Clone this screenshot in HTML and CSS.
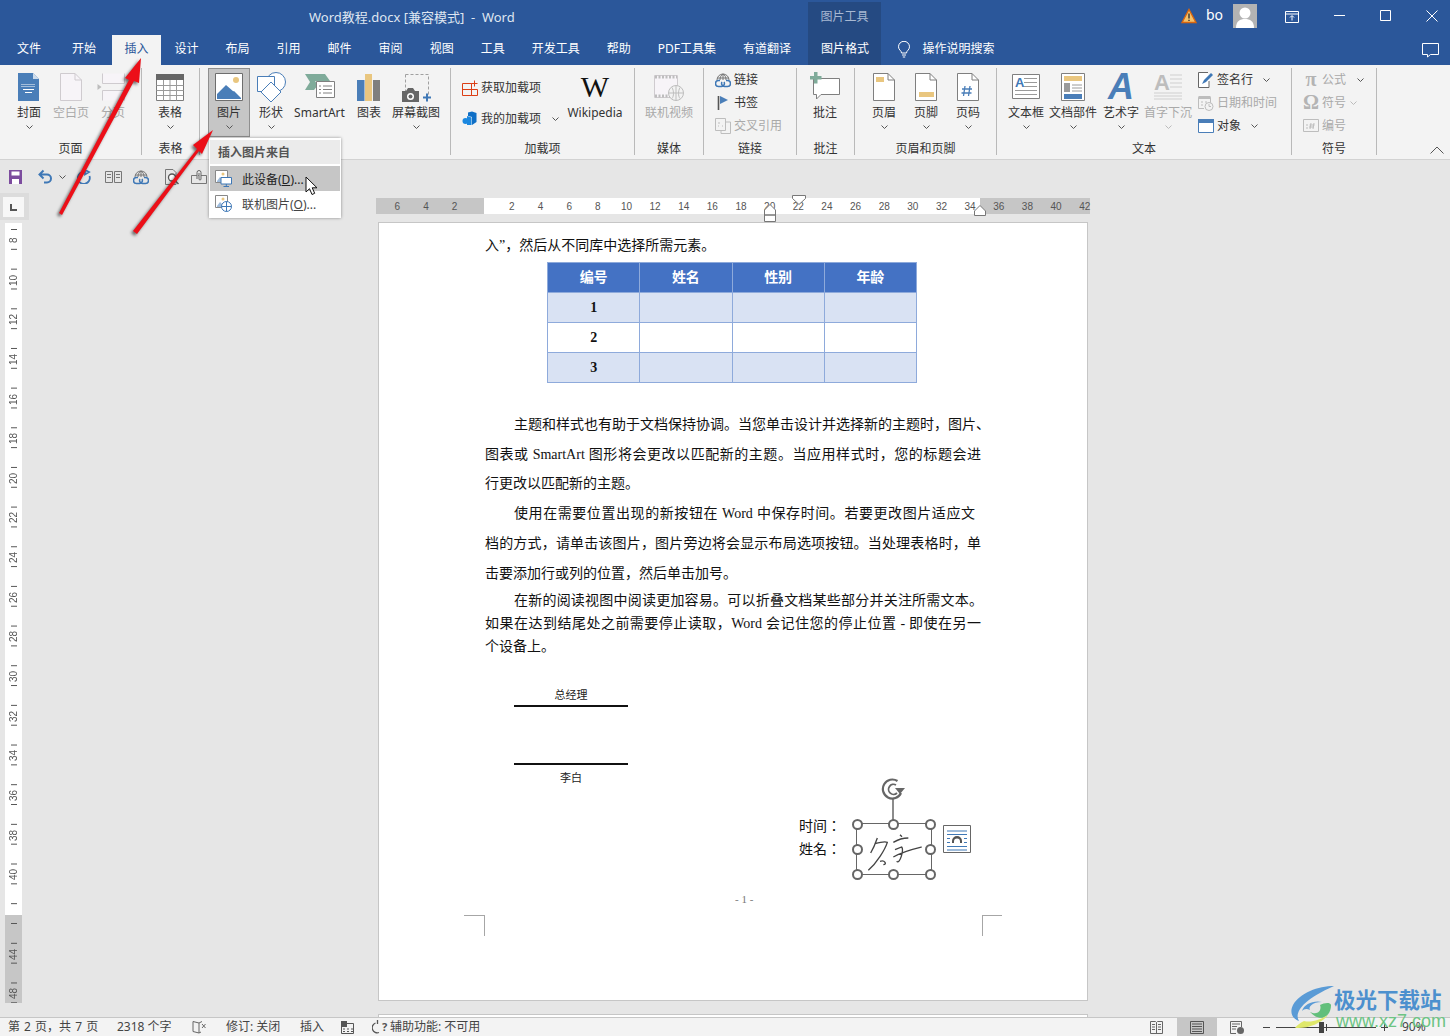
FILE: index.html
```html
<!DOCTYPE html>
<html>

<head>
  <meta charset="utf-8">
  <title>Word教程.docx</title>
  <link rel="stylesheet" href="styles.css">
</head>

<body>
  <!-- 标题栏 -->
  <div class="titlebar">
    <div class="doc-title">Word教程.docx [兼容模式]&nbsp; -&nbsp; Word</div>
    <div class="ctx-title">图片工具</div>
    <div class="win-area">
      <svg class="warn-icon" width="16" height="16" viewBox="0 0 16 16"><path d="M8 1.5L15 14.5H1Z" fill="#f3c26b" stroke="#d9660f" stroke-width="1.4"/><path d="M8 5.5V10.5M8 11.8V13" stroke="#333" stroke-width="1.4"/></svg>
      <span class="user-name">bo</span>
      <div class="avatar"><svg width="24" height="24" viewBox="0 0 24 24"><circle cx="12" cy="9" r="5.5" fill="#fff"/><path d="M3 24C3 17 7 15 12 15S21 17 21 24Z" fill="#fff"/></svg></div>
      <svg class="win-btn display-btn" width="14" height="12" viewBox="0 0 14 12"><path d="M.5 .5H13.5V11.5H.5ZM.5 3H13.5M7 9.5V5M5 6.5L7 4.5L9 6.5" fill="none" stroke="#fff"/></svg>
      <svg class="win-btn min-btn" width="11" height="11" viewBox="0 0 11 11"><path d="M0 5.5H11" stroke="#fff"/></svg>
      <svg class="win-btn max-btn" width="11" height="11" viewBox="0 0 11 11"><path d="M.5 .5H10.5V10.5H.5Z" fill="none" stroke="#fff"/></svg>
      <svg class="win-btn close-btn" width="12" height="12" viewBox="0 0 12 12"><path d="M.5 .5L11.5 11.5M11.5 .5L.5 11.5" stroke="#fff"/></svg>
    </div>
  </div>

  <!-- 选项卡 -->
  <div class="tabbar">
    <div class="tab tab-first">文件</div>
    <div class="tab tab-home">开始</div>
    <div class="tab tab-active">插入</div>
    <div class="tab">设计</div>
    <div class="tab">布局</div>
    <div class="tab">引用</div>
    <div class="tab">邮件</div>
    <div class="tab">审阅</div>
    <div class="tab">视图</div>
    <div class="tab">工具</div>
    <div class="tab">开发工具</div>
    <div class="tab">帮助</div>
    <div class="tab">PDF工具集</div>
    <div class="tab">有道翻译</div>
    <div class="tab tab-ctx">图片格式</div>
    <svg class="bulb" width="14" height="17" viewBox="0 0 14 17"><path d="M4.5 12C4.5 9.5 1.5 9 1.5 5.8A5.5 5.5 0 0 1 12.5 5.8C12.5 9 9.5 9.5 9.5 12ZM5 14H9M5.8 16H8.2" fill="none" stroke="#fff"/></svg>
    <div class="tell-me">操作说明搜索</div>
    <svg class="comment-btn" width="17" height="15" viewBox="0 0 17 15"><path d="M.5 .5H16.5V11.5H8.5L5.5 14V11.5H.5Z" fill="none" stroke="#fff"/></svg>
  </div>

  <!-- 功能区 -->
  <div class="ribbon">
    <div class="group g-page">
      <div class="group-body">
        <div class="big-btn w42">
          <div class="big-icon"><svg width="32" height="32" viewBox="0 0 32 32"><path d="M5 2H20L26 8V30H5Z" fill="#4a7eb8"/><path d="M20 2V8H26Z" fill="#cddcec"/><path d="M8.5 13.5H22.5" stroke="#fff" stroke-dasharray="1 1"/><path d="M8.5 15.5H22.5" stroke="#fff" stroke-dasharray="1 1"/><path d="M10 18.5H21M12 21.5H19" stroke="#fff"/></svg></div>
          <div class="btn-label">封面</div>
          <div class="chev-row"><svg class="chev" width="7" height="4" viewBox="0 0 7 4"><path d="M.5 .5L3.5 3.5L6.5 .5" fill="none" stroke="#555"/></svg></div>
        </div>
        <div class="big-btn w42 off">
          <div class="big-icon"><svg width="32" height="32" viewBox="0 0 32 32"><path d="M5.5 2.5H20L26.5 9V29.5H5.5Z" fill="#f7f4f8" stroke="#cfcbcf"/><path d="M20 2.5V9H26.5" fill="none" stroke="#cfcbcf"/></svg></div>
          <div class="btn-label">空白页</div>
        </div>
        <div class="big-btn w42 off">
          <div class="big-icon"><svg width="32" height="32" viewBox="0 0 32 32"><path d="M5.5 2.5V12.5H27.5V2.5M5.5 29.5V19.5H27.5V29.5" fill="#f7f4f8" stroke="#cfcbcf"/><path d="M.5 13L4.5 16L.5 19Z" fill="#bdbdbd"/></svg></div>
          <div class="btn-label">分页</div>
        </div>
      </div>
      <div class="group-label">页面</div>
    </div>

    <div class="group g-table">
      <div class="group-body">
        <div class="big-btn w42">
          <div class="big-icon"><svg width="32" height="32" viewBox="0 0 32 32"><path d="M2.5 3.5H29.5V29.5H2.5Z" fill="#fff" stroke="#7c7c7c"/><path d="M2 3H30V9H2Z" fill="#666"/><path d="M2.5 14.5H29.5M2.5 19.5H29.5M2.5 24.5H29.5M9.5 9V29.5M16 9V29.5M22.5 9V29.5" stroke="#9a9a9a"/></svg></div>
          <div class="btn-label">表格</div>
          <div class="chev-row"><svg class="chev" width="7" height="4" viewBox="0 0 7 4"><path d="M.5 .5L3.5 3.5L6.5 .5" fill="none" stroke="#555"/></svg></div>
        </div>
      </div>
      <div class="group-label">表格</div>
    </div>

    <div class="group g-illus">
      <div class="group-body">
        <div class="big-btn w42 pressed">
          <div class="big-icon"><svg width="32" height="32" viewBox="0 0 32 32"><path d="M2.5 2.5H29.5V29.5H2.5Z" fill="#fff" stroke="#6e6e6e"/><circle cx="23" cy="9" r="3" fill="#e9c67f"/><path d="M4 28V23L13 14L21 21L18 23L24 28Z" fill="#4a7eb8"/><path d="M20 28L16 23L21 20L28 27V28Z" fill="#4a7eb8"/></svg></div>
          <div class="btn-label">图片</div>
          <div class="chev-row"><svg class="chev" width="7" height="4" viewBox="0 0 7 4"><path d="M.5 .5L3.5 3.5L6.5 .5" fill="none" stroke="#555"/></svg></div>
        </div>
        <div class="big-btn w42">
          <div class="big-icon"><svg width="32" height="32" viewBox="0 0 32 32"><circle cx="21" cy="11" r="9.5" fill="#fff" stroke="#4a7eb8"/><path d="M2.5 5.5H19.5V20.5H2.5Z" fill="#fff" stroke="#4a7eb8"/><path d="M16 11L26 21L16 31L6 21Z" fill="#fff" stroke="#4a7eb8"/></svg></div>
          <div class="btn-label">形状</div>
          <div class="chev-row"><svg class="chev" width="7" height="4" viewBox="0 0 7 4"><path d="M.5 .5L3.5 3.5L6.5 .5" fill="none" stroke="#555"/></svg></div>
        </div>
        <div class="big-btn w55">
          <div class="big-icon"><svg width="32" height="32" viewBox="0 0 32 32"><path d="M1 3H21L26 10H11L14 14L10 19H1L6 11Z" fill="#7fab9a"/><path d="M12.5 10.5H30.5V26.5H12.5Z" fill="#fff" stroke="#808080"/><path d="M15 15H17M19 15H28M15 18.5H17M19 18.5H28M15 22H17M19 22H28" stroke="#808080"/></svg></div>
          <div class="btn-label">SmartArt</div>
        </div>
        <div class="big-btn w44">
          <div class="big-icon"><svg width="32" height="32" viewBox="0 0 32 32"><path d="M4 9H11.5V30H4Z" fill="#4a7eb8"/><path d="M12 3H19V30H12Z" fill="#e9c67f"/><path d="M20 9H27V30H20Z" fill="#7f7f7f"/></svg></div>
          <div class="btn-label">图表</div>
        </div>
        <div class="big-btn w50">
          <div class="big-icon"><svg width="32" height="32" viewBox="0 0 32 32"><path d="M5.5 3.5H28.5V25" fill="none" stroke="#a0a0a0" stroke-dasharray="3 2"/><path d="M5.5 3.5V20" fill="none" stroke="#a0a0a0" stroke-dasharray="3 2"/><path d="M2 20H6L8 17H13L15 20H19V31H2Z" fill="#666"/><circle cx="10.5" cy="25.5" r="3.5" fill="#fff"/><circle cx="10.5" cy="25.5" r="2" fill="#666"/><path d="M23 26.5H31M27 22.5V30.5" stroke="#3f78b6" stroke-width="2"/></svg></div>
          <div class="btn-label">屏幕截图</div>
          <div class="chev-row"><svg class="chev" width="7" height="4" viewBox="0 0 7 4"><path d="M.5 .5L3.5 3.5L6.5 .5" fill="none" stroke="#555"/></svg></div>
        </div>
      </div>
      <div class="group-label">插图</div>
    </div>

    <div class="group g-addin">
      <div class="group-body">
        <div class="small-col addin-col">
          <div class="small-row">
            <svg class="small-icon" width="16" height="16" viewBox="0 0 16 16"><path d="M.5 3.5H9.5V15.5H.5ZM.5 9.5H15.5V15.5H9.5V3.5M12.5 .5V6.5M9.5 3.5H15.5" fill="none" stroke="#dc3e15"/></svg>
            <span>获取加载项</span>
          </div>
          <div class="small-row">
            <svg class="small-icon" width="16" height="16" viewBox="0 0 16 16"><path d="M6 1.5L10 .5L14.5 2V11L10 14V6L6 5Z" fill="#0f6fc6"/><path d="M5 5L9.5 6.5V14H5Z" fill="#1b88e0"/><circle cx="3.5" cy="10" r="3" fill="#1b88e0"/></svg>
            <span>我的加载项</span>
            <svg class="chev chev-mine" width="7" height="4" viewBox="0 0 7 4"><path d="M.5 .5L3.5 3.5L6.5 .5" fill="none" stroke="#555"/></svg>
          </div>
        </div>
        <div class="big-btn w62">
          <div class="big-icon"><span class="wiki-w">W</span></div>
          <div class="btn-label">Wikipedia</div>
        </div>
      </div>
      <div class="group-label">加载项</div>
    </div>

    <div class="group g-media">
      <div class="group-body">
        <div class="big-btn w60 off">
          <div class="big-icon"><svg width="32" height="32" viewBox="0 0 32 32"><path d="M1.5 4.5H24.5V26.5H1.5Z" fill="#f7f4f8" stroke="#cfcbcf"/><path d="M2 6H24M2 25H24" stroke="#bdbdbd" stroke-width="3" stroke-dasharray="2 1.5"/><circle cx="23" cy="22" r="7.5" fill="#f3f3f3" stroke="#bdbdbd"/><path d="M16 22H30M23 14.5V29.5M19 16.5C21 20 21 25 19 27.5M27 16.5C25 20 25 25 27 27.5" fill="none" stroke="#bdbdbd"/></svg></div>
          <div class="btn-label">联机视频</div>
        </div>
      </div>
      <div class="group-label">媒体</div>
    </div>

    <div class="group g-links">
      <div class="group-body">
        <div class="small-col link-col">
          <div class="small-row">
            <svg class="small-icon" width="16" height="16" viewBox="0 0 16 16"><path d="M2 8A6 6 0 0 1 14 8M8 2V8M2 6H14M5 8C5 5 6 3 8 2C10 3 11 5 11 8" fill="none" stroke="#777"/><path d="M5 8.5H3.5A3 3 0 0 0 3.5 14.5H6.5A3 3 0 0 0 9 10M11 8.5H12.5A3 3 0 0 1 12.5 14.5H9.5A3 3 0 0 1 7 10" fill="none" stroke="#3f78b6" stroke-width="1.5"/></svg>
            <span>链接</span>
          </div>
          <div class="small-row">
            <svg class="small-icon" width="16" height="16" viewBox="0 0 16 16"><path d="M3.5 1V15" stroke="#555" stroke-width="1.6"/><path d="M5 1L13 5L5 9Z" fill="#4a7eb8"/></svg>
            <span>书签</span>
          </div>
          <div class="small-row off">
            <svg class="small-icon" width="16" height="16" viewBox="0 0 16 16"><path d="M.5 .5H10.5V12.5H.5ZM6 12.5V15.5H15.5V4H10.5M3 5H5M3 8H4M7 8H8" fill="none" stroke="#bdbdbd"/></svg>
            <span>交叉引用</span>
          </div>
        </div>
      </div>
      <div class="group-label">链接</div>
    </div>

    <div class="group g-comment">
      <div class="group-body">
        <div class="big-btn w42">
          <div class="big-icon"><svg width="32" height="32" viewBox="0 0 32 32"><path d="M4.5 7.5H30.5V23.5H12L7.5 28V23.5H4.5Z" fill="#fff" stroke="#7f7f7f" stroke-linejoin="round"/><path d="M5 1H8.5V5H12.5V8.5H8.5V12.5H5V8.5H1V5H5Z" fill="#7fab9a"/></svg></div>
          <div class="btn-label">批注</div>
        </div>
      </div>
      <div class="group-label">批注</div>
    </div>

    <div class="group g-header">
      <div class="group-body">
        <div class="big-btn w42">
          <div class="big-icon"><svg width="32" height="32" viewBox="0 0 32 32"><path d="M5.5 2.5H20L26.5 9V29.5H5.5Z" fill="#fff" stroke="#7f7f7f"/><path d="M20 2.5V9H26.5" fill="none" stroke="#7f7f7f"/><path d="M8 6H16V11H8Z" fill="#e9c67f"/></svg></div>
          <div class="btn-label">页眉</div>
          <div class="chev-row"><svg class="chev" width="7" height="4" viewBox="0 0 7 4"><path d="M.5 .5L3.5 3.5L6.5 .5" fill="none" stroke="#555"/></svg></div>
        </div>
        <div class="big-btn w42">
          <div class="big-icon"><svg width="32" height="32" viewBox="0 0 32 32"><path d="M5.5 2.5H20L26.5 9V29.5H5.5Z" fill="#fff" stroke="#7f7f7f"/><path d="M20 2.5V9H26.5" fill="none" stroke="#7f7f7f"/><path d="M9 21H24V26H9Z" fill="#e9c67f"/></svg></div>
          <div class="btn-label">页脚</div>
          <div class="chev-row"><svg class="chev" width="7" height="4" viewBox="0 0 7 4"><path d="M.5 .5L3.5 3.5L6.5 .5" fill="none" stroke="#555"/></svg></div>
        </div>
        <div class="big-btn w42">
          <div class="big-icon"><svg width="32" height="32" viewBox="0 0 32 32"><path d="M5.5 2.5H20L26.5 9V29.5H5.5Z" fill="#fff" stroke="#7f7f7f"/><path d="M20 2.5V9H26.5" fill="none" stroke="#7f7f7f"/><path d="M13 15L11.5 25M18 15L16.5 25M10 18H20M9.5 22H19.5" stroke="#4a7eb8" stroke-width="1.3"/></svg></div>
          <div class="btn-label">页码</div>
          <div class="chev-row"><svg class="chev" width="7" height="4" viewBox="0 0 7 4"><path d="M.5 .5L3.5 3.5L6.5 .5" fill="none" stroke="#555"/></svg></div>
        </div>
      </div>
      <div class="group-label">页眉和页脚</div>
    </div>

    <div class="group g-text">
      <div class="group-body">
        <div class="big-btn w44">
          <div class="big-icon"><svg width="32" height="32" viewBox="0 0 32 32"><path d="M2.5 3.5H29.5V27.5H2.5Z" fill="#fff" stroke="#7f7f7f"/><text class="icon-a" x="5" y="16">A</text><path d="M14 7.5H27M14 11.5H27M14 15.5H27M5 19.5H27M5 23.5H27" stroke="#9a9a9a"/></svg></div>
          <div class="btn-label">文本框</div>
          <div class="chev-row"><svg class="chev" width="7" height="4" viewBox="0 0 7 4"><path d="M.5 .5L3.5 3.5L6.5 .5" fill="none" stroke="#555"/></svg></div>
        </div>
        <div class="big-btn w50">
          <div class="big-icon"><svg width="32" height="32" viewBox="0 0 32 32"><path d="M4.5 2.5H27.5V29.5H4.5Z" fill="#fff" stroke="#7f7f7f"/><path d="M7 5H25V10H7Z" fill="#e9c67f"/><path d="M7 12H13V21H7Z" fill="#9a9a9a"/><path d="M15 14H25M15 17H25M15 20H25" stroke="#9a9a9a"/><path d="M7 23H25V28H7Z" fill="#4a7eb8"/></svg></div>
          <div class="btn-label">文档部件</div>
          <div class="chev-row"><svg class="chev" width="7" height="4" viewBox="0 0 7 4"><path d="M.5 .5L3.5 3.5L6.5 .5" fill="none" stroke="#555"/></svg></div>
        </div>
        <div class="big-btn w46">
          <div class="big-icon"><span class="wordart-a">A</span></div>
          <div class="btn-label">艺术字</div>
          <div class="chev-row"><svg class="chev" width="7" height="4" viewBox="0 0 7 4"><path d="M.5 .5L3.5 3.5L6.5 .5" fill="none" stroke="#555"/></svg></div>
        </div>
        <div class="big-btn w48 off">
          <div class="big-icon"><svg width="32" height="32" viewBox="0 0 32 32"><text class="icon-drop" x="2" y="19">A</text><path d="M18 4H30M18 8H30M18 12H30M18 16H30M2 22H30M2 25H30M2 28H30" stroke="#cfcfcf"/></svg></div>
          <div class="btn-label">首字下沉</div>
          <div class="chev-row"><svg class="chev" width="7" height="4" viewBox="0 0 7 4"><path d="M.5 .5L3.5 3.5L6.5 .5" fill="none" stroke="#bbb"/></svg></div>
        </div>
        <div class="small-col text-col">
          <div class="small-row">
            <svg class="small-icon" width="16" height="16" viewBox="0 0 16 16"><path d="M10 .5H.5V15.5H11V9" fill="#fff" stroke="#666"/><path d="M4 12L6 8L13 1L15 3L8 10Z" fill="#3f78b6"/></svg>
            <span>签名行</span>
            <svg class="chev chev-sign" width="7" height="4" viewBox="0 0 7 4"><path d="M.5 .5L3.5 3.5L6.5 .5" fill="none" stroke="#555"/></svg>
          </div>
          <div class="small-row off">
            <svg class="small-icon" width="16" height="16" viewBox="0 0 16 16"><path d="M.5 2.5H12.5V8M.5 2.5V13.5H6" fill="none" stroke="#bdbdbd"/><path d="M.5 1H12.5V4H.5Z" fill="#bdbdbd"/><path d="M3 7H5M7 7H9M3 10H5" stroke="#bdbdbd"/><circle cx="11" cy="11.5" r="4" fill="#f3f3f3" stroke="#bdbdbd"/><path d="M11 9V11.5H13" fill="none" stroke="#bdbdbd"/></svg>
            <span>日期和时间</span>
          </div>
          <div class="small-row">
            <svg class="small-icon" width="16" height="16" viewBox="0 0 16 16"><path d="M.5 1.5H15.5V14.5H.5Z" fill="#fff" stroke="#4a7eb8"/><path d="M0 1H16V5H0Z" fill="#4a7eb8"/></svg>
            <span>对象</span>
            <svg class="chev chev-obj" width="7" height="4" viewBox="0 0 7 4"><path d="M.5 .5L3.5 3.5L6.5 .5" fill="none" stroke="#555"/></svg>
          </div>
        </div>
      </div>
      <div class="group-label">文本</div>
    </div>

    <div class="group g-symbol">
      <div class="group-body">
        <div class="small-col symbol-col">
          <div class="small-row off">
            <span class="sym-glyph">π</span>
            <span>公式</span>
            <svg class="chev chev-eq" width="7" height="4" viewBox="0 0 7 4"><path d="M.5 .5L3.5 3.5L6.5 .5" fill="none" stroke="#555"/></svg>
          </div>
          <div class="small-row off">
            <span class="sym-glyph">Ω</span>
            <span>符号</span>
            <svg class="chev chev-om" width="7" height="4" viewBox="0 0 7 4"><path d="M.5 .5L3.5 3.5L6.5 .5" fill="none" stroke="#bbb"/></svg>
          </div>
          <div class="small-row off">
            <svg class="small-icon" width="16" height="14" viewBox="0 0 16 14"><path d="M.5 .5H15.5V12.5H.5Z" fill="none" stroke="#bdbdbd"/><path d="M3 6H5M3 9H5M8 4L7 10M11 4L10 10M6.5 6H11.5M6 8H11" stroke="#bdbdbd"/></svg>
            <span>编号</span>
          </div>
        </div>
      </div>
      <div class="group-label">符号</div>
    </div>

    <svg class="collapse" width="14" height="8" viewBox="0 0 14 8"><path d="M.5 7.5L7 1L13.5 7.5" fill="none" stroke="#555"/></svg>
  </div>

  <!-- 快速访问工具栏 -->
  <div class="qat">
    <svg class="qat-icon q-save" width="13" height="14" viewBox="0 0 13 14"><path d="M0 0H13V14H0Z" fill="#7c4c9e"/><path d="M2.5 1.5H10.5V5.5H2.5Z" fill="#fff"/><path d="M3 9H10V14H3Z" fill="#fff"/></svg>
    <svg class="qat-icon q-undo" width="15" height="15" viewBox="0 0 15 15"><path d="M2 5.5H9A4 4 0 0 1 9 13.5H6M5.5 1.5L1.5 5.5L5.5 9.5" fill="none" stroke="#3f78b6" stroke-width="2"/></svg>
    <svg class="qat-icon q-chev" width="7" height="4" viewBox="0 0 7 4"><path d="M.5 .5L3.5 3.5L6.5 .5" fill="none" stroke="#555"/></svg>
    <svg class="qat-icon q-redo" width="14" height="14" viewBox="0 0 14 14"><path d="M8 2A6 6 0 1 0 12.5 6M8 0V4.5L12 2Z" fill="none" stroke="#3f78b6" stroke-width="1.8"/></svg>
    <svg class="qat-icon q-book" width="17" height="12" viewBox="0 0 17 12"><path d="M.5 .5H7.5V11.5H.5ZM9.5 .5H16.5V11.5H9.5ZM2 3.5H6M2 6.5H6M11 3.5H15M11 6.5H15" fill="none" stroke="#777"/></svg>
    <svg class="qat-icon q-link" width="16" height="16" viewBox="0 0 16 16"><path d="M2 8A6 6 0 0 1 14 8M8 2V8M2 6H14M5 8C5 5 6 3 8 2C10 3 11 5 11 8" fill="none" stroke="#777"/><path d="M5 8.5H3.5A3 3 0 0 0 3.5 14.5H6.5A3 3 0 0 0 9 10M11 8.5H12.5A3 3 0 0 1 12.5 14.5H9.5A3 3 0 0 1 7 10" fill="none" stroke="#3f78b6" stroke-width="1.5"/></svg>
    <svg class="qat-icon q-prev" width="16" height="16" viewBox="0 0 16 16"><path d="M1.5 .5H9L12 3.5V15.5H1.5Z" fill="none" stroke="#777"/><circle cx="8" cy="8.5" r="3.5" fill="#fff" stroke="#555" stroke-width="1.3"/><path d="M10.5 11L14.5 15" stroke="#555" stroke-width="1.5"/></svg>
    <svg class="qat-icon q-clip" width="16" height="16" viewBox="0 0 16 16"><path d="M.5 6.5H15.5V14.5H.5Z" fill="none" stroke="#777"/><path d="M6 10V3.5A2 2 0 0 1 10 3.5V10A1 1 0 0 1 8 10V4" fill="#e6e6e6" stroke="#666"/></svg>
  </div>

  <!-- 文档区 -->
  <div class="workspace">
    <div class="side-col">
      <div class="corner-wrap">
        <div class="corner-btn"><svg width="7" height="7" viewBox="0 0 7 7"><path d="M1 0V6H7" fill="none" stroke="#555" stroke-width="2"/></svg></div>
      </div>
      <div class="vruler">
        <span class="vnum">8</span><span class="vnum">10</span><span class="vnum">12</span><span class="vnum">14</span><span class="vnum">16</span><span class="vnum">18</span><span class="vnum">20</span><span class="vnum">22</span><span class="vnum">24</span><span class="vnum">26</span><span class="vnum">28</span><span class="vnum">30</span><span class="vnum">32</span><span class="vnum">34</span><span class="vnum">36</span><span class="vnum">38</span><span class="vnum">40</span><span class="vnum"></span><span class="vnum">44</span><span class="vnum">48</span>
      </div>
    </div>

    <div class="doc-col">
      <div class="hruler">
        <span>6</span><span>4</span><span>2</span><span></span><span>2</span><span>4</span><span>6</span><span>8</span><span>10</span><span>12</span><span>14</span><span>16</span><span>18</span><span>20</span><span>22</span><span>24</span><span>26</span><span>28</span><span>30</span><span>32</span><span>34</span><span>36</span><span>38</span><span>40</span><span>42</span>
        <svg class="marker marker-top" width="14" height="10" viewBox="0 0 14 10"><path d="M.5 .5H13.5V3.5L7 9.5L.5 3.5Z" fill="#fff" stroke="#777"/></svg>
        <svg class="marker marker-left" width="12" height="18" viewBox="0 0 12 18"><path d="M6 .5L11.5 6V11H.5V6Z M.5 11H11.5V17.5H.5Z" fill="#fff" stroke="#777"/></svg>
        <svg class="marker marker-right" width="12" height="11" viewBox="0 0 12 11"><path d="M6 .5L11.5 6V10.5H.5V6Z" fill="#fff" stroke="#777"/></svg>
      </div>

      <div class="page">
        <div class="crop crop-left"></div>
        <div class="crop crop-right"></div>

        <div class="line first-line">入”，然后从不同库中选择所需元素。</div>

        <table class="doc-table">
          <tr class="head-row"><th>编号</th><th>姓名</th><th>性别</th><th>年龄</th></tr>
          <tr class="band"><td>1</td><td></td><td></td><td></td></tr>
          <tr><td>2</td><td></td><td></td><td></td></tr>
          <tr class="band"><td>3</td><td></td><td></td><td></td></tr>
        </table>

        <div class="para-wide">
          <div class="jline indent">主题和样式也有助于文档保持协调。当您单击设计并选择新的主题时，图片、</div>
          <div class="jline">图表或 SmartArt 图形将会更改以匹配新的主题。当应用样式时，您的标题会进</div>
          <div class="line">行更改以匹配新的主题。</div>
          <div class="jline indent short">使用在需要位置出现的新按钮在 Word 中保存时间。若要更改图片适应文</div>
          <div class="jline">档的方式，请单击该图片，图片旁边将会显示布局选项按钮。当处理表格时，单</div>
          <div class="line">击要添加行或列的位置，然后单击加号。</div>
        </div>

        <div class="para-tight">
          <div class="jline indent over">在新的阅读视图中阅读更加容易。可以折叠文档某些部分并关注所需文本。</div>
          <div class="jline">如果在达到结尾处之前需要停止读取，Word 会记住您的停止位置 - 即使在另一</div>
          <div class="line">个设备上。</div>
        </div>

        <div class="sign sign-top">总经理</div>
        <div class="sign sign-bottom">李白</div>

        <div class="sign-row">
          <div class="sign-labels">
            <div>时间：</div>
            <div>姓名：</div>
          </div>
          <div class="pic-box">
            <svg class="sign-pic" width="74" height="50" viewBox="232 163 220 150"><path d="M292 205C285 225 278 240 272 250M285 222C300 218 315 215 322 218C315 240 290 280 265 302M300 275C315 270 322 285 310 285M360 195L366 201M340 218C350 212 365 205 385 205M345 240L365 232C372 240 360 285 350 275M340 262C370 245 400 238 425 232" fill="none" stroke="#444" stroke-width="4"/></svg>
            <svg class="rotate-handle" width="34" height="46" viewBox="0 0 34 46"><path d="M17 21V46" stroke="#666" stroke-width="1.5"/><path d="M25 15A9.5 9.5 0 1 1 21.5 3" fill="none" stroke="#666" stroke-width="2.2"/><path d="M21 15A5 5 0 1 1 20 7" fill="none" stroke="#666" stroke-width="1.8"/><path d="M19 10H29L24 16Z" fill="#666"/></svg>
            <i class="handle h-tl"></i><i class="handle h-tm"></i><i class="handle h-tr"></i>
            <i class="handle h-ml"></i><i class="handle h-mr"></i>
            <i class="handle h-bl"></i><i class="handle h-bm"></i><i class="handle h-br"></i>
          </div>
          <div class="layout-btn"><svg width="28" height="28" viewBox="0 0 28 28"><path d="M.5 .5H27.5V27.5H.5Z" fill="#fff" stroke="#666"/><path d="M4 6H24M4 9.5H24M4 21.5H24M4 25H24" stroke="#3f78b6"/><path d="M4 13.5H7M4 17.5H7M21 13.5H24M21 17.5H24" stroke="#3f78b6"/><path d="M9 18V16A5 5 0 0 1 19 16V18H17V16.5A3 3 0 0 0 11 16.5V18Z" fill="#555"/></svg></div>
        </div>

        <div class="page-num">- 1 -</div>
      </div>

      <div class="page next-page"></div>
    </div>
  </div>

  <!-- 状态栏 -->
  <div class="statusbar">
    <span class="st-pages">第 2 页，共 7 页</span>
    <span class="st-words">2318 个字</span>
    <svg class="st-book" width="14" height="13" viewBox="0 0 14 13"><path d="M7 2L1 .5V10.5L7 12V2L10 .5M7 12L9 11" fill="none" stroke="#666"/><path d="M10 3L13.5 7M13.5 3L10 7" stroke="#666"/></svg>
    <span class="st-track">修订: 关闭</span>
    <span class="st-insert">插入</span>
    <svg class="st-macro" width="13" height="13" viewBox="0 0 13 13"><path d="M.5 2.5H12.5V12.5H.5Z" fill="none" stroke="#555"/><path d="M0 0H6V6H0Z" fill="#555"/><path d="M2 8H4M6 8H8M10 8H12M2 10.5H4M6 10.5H8M10 10.5H12" stroke="#555"/></svg>
    <svg class="st-access" width="10" height="14" viewBox="0 0 10 14"><path d="M3.5 3A5 5 0 1 0 7 12.5M5.5 0V4" fill="none" stroke="#555" stroke-width="1.3"/></svg>
    <span class="st-q">?</span>
    <span class="st-a11y">辅助功能: 不可用</span>
    <div class="st-right">
      <svg class="st-view" width="13" height="13" viewBox="0 0 13 13"><path d="M.5 .5H5.5L6.5 1.5L7.5 .5H12.5V12.5H.5ZM6.5 1.5V12.5M2 3.5H5M2 6H5M2 8.5H5M8 3.5H11M8 6H11M8 8.5H11" fill="none" stroke="#666"/></svg>
      <div class="view-active"><svg width="14" height="13" viewBox="0 0 14 13"><path d="M.5 .5H13.5V12.5H.5ZM2 3H12M2 5.5H12M2 8H12M2 10.5H12" fill="none" stroke="#555"/></svg></div>
      <svg class="st-web" width="14" height="13" viewBox="0 0 14 13"><path d="M.5 .5H11.5V6M.5 .5V12.5H6M2 3H10M2 5.5H7M2 8H6" fill="none" stroke="#666"/><circle cx="10.5" cy="9.5" r="3.5" fill="#666"/></svg>
      <span class="zoom-minus"></span>
      <div class="zoom-track"><i class="zoom-mid"></i><i class="zoom-thumb"></i></div>
      <span class="zoom-plus"></span>
      <span class="zoom-val">90%</span>
    </div>
  </div>

  <!-- 下拉菜单 -->
  <div class="menu">
    <div class="menu-head">插入图片来自</div>
    <div class="menu-item menu-hot">
      <svg width="17" height="17" viewBox="0 0 17 17"><path d="M.5 .5H12.5V12.5H.5Z" fill="#fff" stroke="#888"/><circle cx="8" cy="4" r="1.5" fill="#e9c67f"/><path d="M2 11L5 7L8 10V12H2Z" fill="#9dbbdc"/><path d="M6 7.5H16.5V14H6Z" fill="#fff" stroke="#3f78b6"/><path d="M11.3 14V16.5M8.5 16.5H14" stroke="#3f78b6"/></svg>
      <span>此设备(<u>D</u>)...</span>
    </div>
    <div class="menu-item">
      <svg width="17" height="17" viewBox="0 0 17 17"><path d="M.5 .5H12.5V12.5H.5Z" fill="#fff" stroke="#888"/><circle cx="8" cy="4" r="1.5" fill="#e9c67f"/><path d="M2 11L5 7L8 10V12H2Z" fill="#9dbbdc"/><circle cx="11.5" cy="11.5" r="5" fill="#fff" stroke="#3f78b6"/><path d="M6.5 11.5H16.5M11.5 6.5V16.5" stroke="#3f78b6"/></svg>
      <span>联机图片(<u>O</u>)...</span>
    </div>
  </div>

  <svg class="cursor" width="14" height="20" viewBox="0 0 14 20"><path d="M1 1V16L4.5 12.7L7 18.5L9.7 17.3L7.2 11.8H12Z" fill="#fff" stroke="#111"/></svg>

  <!-- 标注箭头 -->
  <svg class="arrows" width="240" height="240" viewBox="0 0 240 240">
    <path d="M59 213L129 80L125 78L141 58L139 83L134 81L62 215Z" fill="#ec0f18"/>
    <path d="M133 231L197 149L193 145L213 130L202 154L199 151L137 234Z" fill="#ec0f18"/>
  </svg>

  <!-- 水印 -->
  <div class="watermark">
    <svg class="wm-logo" width="48" height="46" viewBox="0 0 48 46"><path d="M44 1C28 1 10 8 3 20C-1 28 3 34 9 36C4 28 12 15 44 1Z" fill="#5a9bd6"/><path d="M12 26C14 19 24 15 32 17C22 17 18 22 20 25C16 23 14 24 12 26Z" fill="#5a9bd6"/><path d="M20 27C28 31 32 25 30 20C34 18 40 17 41 20C41 32 30 38 20 27Z" fill="#62bf7b"/><path d="M5 43C18 44 32 38 38 30C32 34 22 38 14 36C10 38 7 40 5 43Z" fill="#dfe86a"/></svg>
    <div class="wm-text">
      <div class="wm-cn">极光下载站</div>
      <div class="wm-url">www.xz7.com</div>
    </div>
  </div>
</body>

</html>
```
FILE: styles.css
```css
html,
body {
  margin: 0;
  padding: 0;
}

body {
  width: 1450px;
  height: 1036px;
  overflow: hidden;
  position: relative;
  display: flex;
  flex-direction: column;
  background-color: #e6e6e6;
  color: #333;
  font-family: "Noto Sans", "Noto Sans CJK SC", sans-serif;
  font-size: 12px;
}

svg {
  display: block;
  flex: none;
}

/* 标题栏 */
.titlebar {
  height: 35px;
  flex: none;
  display: flex;
  background-color: #2b579a;
}

.doc-title {
  margin-left: 309px;
  width: 499px;
  padding-top: 8px;
  font-size: 13px;
  line-height: 18px;
  color: #dfe6f1;
}

.ctx-title {
  width: 73px;
  margin-top: 2px;
  padding-top: 6px;
  text-align: center;
  line-height: 18px;
  color: #a7b8d2;
  background-color: #254a82;
}

.win-area {
  flex: 1;
  display: flex;
  align-items: flex-start;
}

.warn-icon {
  margin: 8px 0 0 300px;
}

.user-name {
  margin: 6px 0 0 9px;
  font-size: 14px;
  line-height: 18px;
  color: #fff;
}

.avatar {
  width: 24px;
  height: 24px;
  margin: 4px 0 0 10px;
  background-color: #b3b3b3;
  overflow: hidden;
}

.win-btn {
  margin-top: 10px;
}

.display-btn {
  margin-left: 28px;
  margin-top: 11px;
}

.min-btn {
  margin-left: 35px;
}

.max-btn {
  margin-left: 35px;
}

.close-btn {
  margin-left: 35px;
}

/* 选项卡 */
.tabbar {
  height: 30px;
  flex: none;
  display: flex;
  background-color: #2b579a;
  color: #fff;
  line-height: 28px;
}

.tab {
  padding: 0 13.5px;
}

.tab-first {
  padding-left: 17px;
  padding-right: 17.5px;
}

.tab-home {
  padding-right: 16px;
}

.tab-active {
  padding: 0 12.5px;
  background-color: #f3f3f3;
  color: #2b579a;
}

.tab-ctx {
  width: 73px;
  margin-left: 4px;
  padding: 0;
  text-align: center;
  background-color: #254a82;
}

.bulb {
  margin: 6px 0 0 16px;
}

.tell-me {
  margin-left: 11px;
}

.comment-btn {
  margin: 8px 0 0 428px;
}

/* 功能区 */
.ribbon {
  height: 94px;
  flex: none;
  position: relative;
  display: flex;
  align-items: flex-start;
  background-color: #f3f3f3;
  border-bottom: 1px solid #d2d2d2;
}

.group {
  box-sizing: border-box;
  height: 87px;
  margin-top: 3px;
  border-right: 1px solid #b9b9b9;
  display: flex;
  flex-direction: column;
}

.group-body {
  height: 72px;
  flex: none;
  display: flex;
  align-items: flex-start;
}

.group-label {
  padding-top: 1px;
  text-align: center;
  line-height: 16px;
  color: #333;
}

.g-page {
  width: 142px;
}

.g-page .group-body {
  padding-left: 8px;
}

.g-table {
  width: 58px;
}

.g-table .group-body {
  padding-left: 7px;
}

.g-illus {
  width: 251px;
}

.g-illus .group-body {
  padding-left: 8px;
}

.g-illus .group-label {
  visibility: hidden;
}

.g-addin {
  width: 184px;
}

.g-addin .group-body {
  padding-left: 11px;
}

.g-media {
  width: 69px;
}

.g-media .group-body {
  padding-left: 4px;
}

.g-links {
  width: 93px;
}

.g-links .group-body {
  padding-left: 11px;
}

.g-comment {
  width: 58px;
}

.g-comment .group-body {
  padding-left: 7px;
}

.g-header {
  width: 142px;
}

.g-header .group-body {
  padding-left: 8px;
}

.g-text {
  width: 295px;
}

.g-text .group-body {
  padding-left: 7px;
}

.g-symbol {
  width: 85px;
}

.g-symbol .group-body {
  padding-left: 11px;
}

.big-btn {
  box-sizing: border-box;
  height: 69px;
  padding-top: 1px;
  display: flex;
  flex-direction: column;
  align-items: center;
}

.w42 {
  width: 42px;
}

.w44 {
  width: 44px;
}

.w46 {
  width: 46px;
}

.w48 {
  width: 48px;
}

.w50 {
  width: 50px;
}

.w55 {
  width: 55px;
}

.w60 {
  width: 60px;
}

.w62 {
  width: 62px;
}

.pressed {
  background-color: #c6c6c6;
  outline: 1px solid #8f8f8f;
  outline-offset: -1px;
}

.big-icon {
  height: 36px;
  flex: none;
  display: flex;
  align-items: center;
  justify-content: center;
}

.btn-label {
  height: 16px;
  line-height: 16px;
  white-space: nowrap;
}

.chev-row {
  height: 12px;
  display: flex;
  align-items: center;
}

.off {
  color: #a9a9a9;
}

.wiki-w {
  font-family: "Liberation Serif", serif;
  font-size: 30px;
  line-height: 36px;
  color: #111;
}

.wordart-a {
  font-family: "Liberation Sans", sans-serif;
  font-size: 36px;
  font-weight: bold;
  font-style: italic;
  line-height: 36px;
  color: #4a7eb8;
}

.icon-a {
  font-family: "Liberation Sans", sans-serif;
  font-size: 13px;
  font-weight: bold;
  fill: #3f78b6;
}

.icon-drop {
  font-family: "Liberation Sans", sans-serif;
  font-size: 22px;
  font-weight: bold;
  fill: #bdbdbd;
}

.small-col {
  display: flex;
  flex-direction: column;
}

.small-row {
  height: 23px;
  display: flex;
  align-items: center;
  white-space: nowrap;
}

.small-row > span {
  margin-top: -2px;
}

.small-icon {
  margin-right: 3px;
}

.addin-col {
  width: 102px;
  padding-top: 8px;
  gap: 8px;
}

.chev-mine {
  margin-left: 11px;
}

.text-col {
  margin-left: 6px;
  width: 85px;
}

.chev-sign {
  margin-left: 10px;
}

.chev-obj {
  margin-left: 10px;
}

.symbol-col {
  width: 70px;
}

.sym-glyph {
  width: 16px;
  margin-right: 3px;
  text-align: center;
  font-family: "Liberation Serif", serif;
  font-size: 20px;
  font-weight: bold;
  line-height: 20px;
  color: #b4b4b4;
}

.chev-eq {
  margin-left: 11px;
}

.chev-om {
  margin-left: 4px;
}

.collapse {
  position: absolute;
  right: 6px;
  top: 81px;
}

/* 快速访问工具栏 */
.qat {
  height: 31px;
  flex: none;
  position: relative;
  display: flex;
  align-items: center;
}

.q-save {
  margin: 2px 0 0 9px;
}

.q-undo {
  margin: 2px 0 0 16px;
}

.q-chev {
  margin: 2px 0 0 6px;
}

.q-redo {
  margin: 2px 0 0 11px;
}

.q-book {
  margin: 2px 0 0 14px;
}

.q-link {
  margin: 2px 0 0 11px;
}

.q-prev {
  margin: 2px 0 0 15px;
}

.q-clip {
  margin: 2px 0 0 11px;
}

/* 文档区 */
.workspace {
  flex: 1;
  min-height: 0;
  display: flex;
  overflow: hidden;
}

.side-col {
  width: 29px;
  flex: none;
}

.corner-wrap {
  box-sizing: border-box;
  height: 27px;
  margin-top: 2px;
  padding: 4px 0 0 3px;
  background-color: #dcdcdc;
}

.corner-btn {
  width: 21px;
  height: 20px;
  display: flex;
  align-items: center;
  justify-content: center;
  background-color: #f7f7f7;
}

.vruler {
  box-sizing: border-box;
  width: 17px;
  height: 780px;
  margin: 3px 0 0 5px;
  padding-top: 7px;
  display: flex;
  flex-direction: column;
  align-items: center;
  overflow: hidden;
  background:
    linear-gradient(#555 1px, transparent 1px) center 6px / 6px 19.83px repeat-y,
    linear-gradient(#fff 692px, #c6c6c6 692px);
}

.vnum {
  height: 20px;
  flex: none;
  margin-bottom: 19.65px;
  writing-mode: vertical-rl;
  transform: rotate(180deg);
  text-align: center;
  line-height: 17px;
  font-family: "Liberation Sans", sans-serif;
  font-size: 10px;
  color: #555;
}

.doc-col {
  flex: 1;
  min-width: 0;
}

.hruler {
  position: relative;
  box-sizing: border-box;
  width: 714px;
  height: 16px;
  margin: 7px 0 0 347px;
  padding-left: 7px;
  display: flex;
  background: linear-gradient(to right, #c6c6c6 108px, #fff 108px, #fff 604px, #c6c6c6 604px);
}

.hruler span {
  width: 28.65px;
  flex: none;
  text-align: center;
  line-height: 18px;
  font-family: "Liberation Sans", sans-serif;
  font-size: 10px;
  color: #555;
}

.marker {
  position: absolute;
}

.marker-top {
  left: 416px;
  top: -3px;
}

.marker-left {
  left: 388px;
  top: 6px;
}

.marker-right {
  left: 598px;
  top: 7px;
}

.page {
  position: relative;
  box-sizing: border-box;
  width: 710px;
  height: 779px;
  margin: 8px 0 0 349px;
  padding: 13px 0 0 106px;
  background-color: #fff;
  border: 1px solid #c6c6c6;
  font-family: "Liberation Serif", "Noto Sans CJK SC", serif;
  font-size: 14px;
  color: #111;
}

.next-page {
  margin-top: 13px;
  height: 40px;
}

.crop {
  position: absolute;
  width: 20px;
  height: 20px;
  top: 692px;
  border-top: 1px solid #a6a6a6;
}

.crop-left {
  left: 85px;
  border-right: 1px solid #a6a6a6;
}

.crop-right {
  left: 603px;
  width: 19px;
  border-left: 1px solid #a6a6a6;
}

.first-line {
  line-height: 20px;
}

.line {
  white-space: nowrap;
}

.jline {
  width: 496px;
  white-space: nowrap;
  text-align: justify;
  text-align-last: justify;
}

.indent {
  box-sizing: border-box;
  padding-left: 29px;
}

.short {
  width: 490px;
}

.over {
  width: 498px;
}

.doc-table {
  margin: 6px 0 0 62px;
  width: 370px;
  height: 121px;
  border-collapse: collapse;
  table-layout: fixed;
}

.doc-table th,
.doc-table td {
  height: 29px;
  padding: 0;
  text-align: center;
  line-height: 20px;
  border: 1px solid #8eaadb;
  font-weight: bold;
}

.head-row th {
  background-color: #4472c4;
  color: #fff;
}

.band td {
  background-color: #d9e2f3;
}

.para-wide {
  margin-top: 27px;
  line-height: 29.7px;
}

.para-tight {
  margin-top: 1px;
  line-height: 23px;
}

.sign {
  width: 114px;
  margin-left: 29px;
  text-align: center;
  font-family: "Noto Sans CJK SC", sans-serif;
  font-size: 11px;
  line-height: 16px;
  color: #222;
}

.sign-top {
  margin-top: 28px;
  padding-bottom: 3px;
  border-bottom: 2px solid #111;
}

.sign-bottom {
  margin-top: 56px;
  padding-top: 4px;
  border-top: 2px solid #111;
}

.sign-row {
  display: flex;
  align-items: flex-start;
  margin: 30px 0 0 314px;
}

.sign-labels {
  width: 58px;
  font-family: "Liberation Serif", "Noto Sans CJK TC", serif;
  line-height: 23px;
}

.pic-box {
  position: relative;
  box-sizing: border-box;
  width: 74px;
  height: 50px;
  margin-top: 9px;
  outline: 1px solid #666;
}

.sign-pic {
  width: 74px;
  height: 50px;
}

.rotate-handle {
  position: absolute;
  left: 19px;
  top: -46px;
}

.handle {
  position: absolute;
  box-sizing: border-box;
  width: 11px;
  height: 11px;
  border: 2px solid #666;
  border-radius: 50%;
  background-color: #fff;
}

.h-tl,
.h-tm,
.h-tr {
  top: -5px;
}

.h-ml,
.h-mr {
  top: 20px;
}

.h-bl,
.h-bm,
.h-br {
  top: 45px;
}

.h-tl,
.h-ml,
.h-bl {
  left: -5px;
}

.h-tm,
.h-bm {
  left: 31px;
}

.h-tr,
.h-mr,
.h-br {
  left: 68px;
}

.layout-btn {
  margin: 10px 0 0 12px;
}

.page-num {
  margin-top: 17px;
  padding-left: 250px;
  line-height: 16px;
  font-size: 11px;
  color: #777;
}

/* 状态栏 */
.statusbar {
  position: relative;
  height: 18px;
  flex: none;
  display: flex;
  align-items: center;
  background-color: #f3f3f3;
  border-top: 1px solid #c6c6c6;
  line-height: 18px;
  color: #444;
  white-space: nowrap;
}

.st-pages {
  margin-left: 8px;
  width: 109px;
  word-spacing: 1px;
}

.st-words {
  width: 75px;
}

.st-book {
  margin-right: 20px;
}

.st-track {
  width: 74px;
}

.st-insert {
  width: 41px;
}

.st-macro {
  margin-right: 18px;
}

.st-q {
  width: 8px;
  font-size: 11px;
  font-weight: bold;
  color: #555;
}

.st-right {
  margin-left: auto;
  height: 18px;
  display: flex;
  align-items: center;
}

.st-view {
  margin-right: 14px;
}

.view-active {
  width: 40px;
  height: 18px;
  display: flex;
  align-items: center;
  justify-content: center;
  background-color: #c6c6c6;
}

.st-web {
  margin-left: 13px;
}

.zoom-minus,
.zoom-plus {
  position: relative;
  width: 7px;
  height: 1px;
  background-color: #444;
}

.zoom-minus {
  margin-left: 19px;
}

.zoom-plus {
  margin-left: 5px;
}

.zoom-plus::after {
  content: "";
  position: absolute;
  left: 3px;
  top: -3px;
  width: 1px;
  height: 7px;
  background-color: #444;
}

.zoom-track {
  position: relative;
  width: 100px;
  height: 1px;
  margin-left: 6px;
  background-color: #444;
}

.zoom-mid {
  position: absolute;
  left: 50px;
  top: -3px;
  width: 1px;
  height: 7px;
  background-color: #444;
}

.zoom-thumb {
  position: absolute;
  left: 43px;
  top: -5px;
  width: 5px;
  height: 11px;
  background-color: #444;
}

.zoom-val {
  width: 48px;
  margin-left: 14px;
}

/* 下拉菜单 */
.menu {
  position: absolute;
  left: 209px;
  top: 138px;
  box-sizing: border-box;
  width: 132px;
  height: 80px;
  padding: 2px 1px 0;
  background-color: #fff;
  box-shadow: 0 0 3px rgba(0, 0, 0, 0.4);
}

.menu-head {
  height: 24px;
  margin-bottom: 2px;
  padding-left: 8px;
  line-height: 25px;
  font-weight: bold;
  color: #555;
  background-color: #ebebeb;
}

.menu-item {
  height: 25px;
  display: flex;
  align-items: center;
  padding-left: 5px;
  color: #444;
}

.menu-item span {
  margin-left: 10px;
  white-space: nowrap;
}

.menu-hot {
  background-color: #c6c6c6;
  color: #222;
}

.cursor {
  position: absolute;
  left: 305px;
  top: 176px;
}

.arrows {
  position: absolute;
  left: 0;
  top: 0;
  filter: drop-shadow(-2px 2px 1.5px rgba(0, 0, 0, 0.55));
}

/* 水印 */
.watermark {
  position: absolute;
  left: 1290px;
  top: 985px;
  display: flex;
}

.wm-text {
  margin-left: -4px;
}

.wm-cn {
  font-family: "Noto Sans CJK SC", sans-serif;
  font-size: 21.5px;
  font-weight: bold;
  line-height: 27px;
  color: #4d90ce;
  white-space: nowrap;
}

.wm-url {
  font-family: "Liberation Sans", sans-serif;
  font-size: 18px;
  line-height: 18px;
  color: #6cc483;
  white-space: nowrap;
  padding-left: 2px;
}
```
